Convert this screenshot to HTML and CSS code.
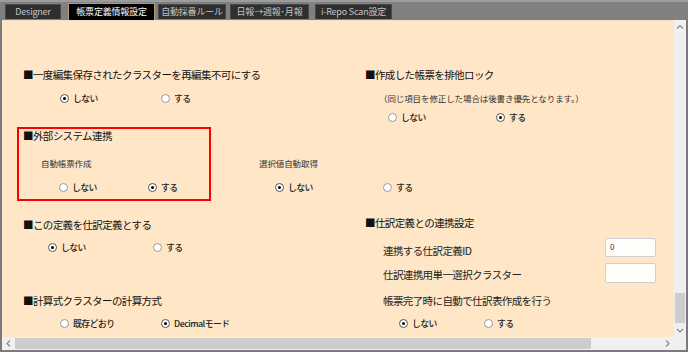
FILE: index.html
```html
<!DOCTYPE html>
<html lang="ja">
<head>
<meta charset="utf-8">
<link rel="stylesheet" href="styles.css">
</head>
<body>
<div class="window">
  <div class="tabs">
    <div class="tab t1">Designer</div>
    <div class="tab t2 sel">帳票定義情報設定</div>
    <div class="tab t3">自動採番ルール</div>
    <div class="tab t4">日報→週報･月報</div>
    <div class="tab t5">i-Repo Scan設定</div>
  </div>

  <div class="content">
    <div class="cols sec-a">
      <div class="col">
        <div class="h">■一度編集保存されたクラスターを再編集不可にする</div>
        <div class="radios ra-l">
          <div class="opt"><span class="dot on"></span>しない</div>
          <div class="opt"><span class="dot"></span>する</div>
        </div>
      </div>
      <div class="col">
        <div class="h">■作成した帳票を排他ロック</div>
        <div class="note">（同じ項目を修正した場合は後書き優先となります。）</div>
        <div class="radios ra-r">
          <div class="opt"><span class="dot"></span>しない</div>
          <div class="opt"><span class="dot on"></span>する</div>
        </div>
      </div>
    </div>

    <div class="sec-b">
      <div class="h">■外部システム連携</div>
      <div class="subs">
        <div class="sub">自動帳票作成</div>
        <div class="sub">選択値自動取得</div>
      </div>
      <div class="radios rb">
        <div class="opt"><span class="dot"></span>しない</div>
        <div class="opt"><span class="dot on"></span>する</div>
        <div class="opt"><span class="dot on"></span>しない</div>
        <div class="opt"><span class="dot"></span>する</div>
      </div>
      <div class="highlight"></div>
    </div>

    <div class="cols sec-c">
      <div class="col">
        <div class="h hc">■この定義を仕訳定義とする</div>
        <div class="radios rc1">
          <div class="opt"><span class="dot on"></span>しない</div>
          <div class="opt"><span class="dot"></span>する</div>
        </div>
        <div class="h hc2">■計算式クラスターの計算方式</div>
        <div class="radios rc2">
          <div class="opt"><span class="dot"></span>既存どおり</div>
          <div class="opt"><span class="dot on"></span>Decimalモード</div>
        </div>
      </div>
      <div class="col">
        <div class="h">■仕訳定義との連携設定</div>
        <div class="field f1">
          <div class="lbl">連携する仕訳定義ID</div>
          <div class="input">0</div>
        </div>
        <div class="field f2">
          <div class="lbl">仕訳連携用単一選択クラスター</div>
          <div class="input"></div>
        </div>
        <div class="lbl lbl3">帳票完了時に自動で仕訳表作成を行う</div>
        <div class="radios rc3">
          <div class="opt"><span class="dot on"></span>しない</div>
          <div class="opt"><span class="dot"></span>する</div>
        </div>
      </div>
    </div>
  </div>

  <div class="vscroll">
    <div class="arrow"><svg width="12" height="12" viewBox="0 0 12 12"><polyline points="3,7.5 6,4.5 9,7.5" fill="none" stroke="#8a8a8a" stroke-width="1.2"/></svg></div>
    <div class="spacer"></div>
    <div class="vthumb"></div>
    <div class="arrow down"><svg width="12" height="12" viewBox="0 0 12 12"><polyline points="3,5 6,8 9,5" fill="none" stroke="#8a8a8a" stroke-width="1.2"/></svg></div>
  </div>

  <div class="hscroll">
    <div class="harrow"><svg width="13" height="13" viewBox="0 0 13 13"><polyline points="8,3.5 5,6.5 8,9.5" fill="none" stroke="#8a8a8a" stroke-width="1.2"/></svg></div>
    <div class="hthumb"></div>
    <div class="spacer"></div>
    <div class="harrow"><svg width="13" height="13" viewBox="0 0 13 13"><polyline points="5,3.5 8,6.5 5,9.5" fill="none" stroke="#8a8a8a" stroke-width="1.2"/></svg></div>
  </div>
  <div class="corner"></div>
</div>
</body>
</html>
```
FILE: styles.css
```css
html, body {
  margin: 0;
  padding: 0;
  background: #7f7f7f;
}

body {
  font-family: "Noto Sans CJK JP", "Noto Sans", sans-serif;
}

.window {
  width: 688px;
  height: 352px;
  box-sizing: border-box;
  padding: 0 2px 2px 2px;
  background: #7b7b7b;
  border-top: 2px solid #9c9c9c;
  display: grid;
  grid-template-columns: 672px 12px;
  grid-template-rows: 18px 317px 13px;
}

/* Tabs */
.tabs {
  grid-column: 1 / -1;
  display: flex;
  align-items: flex-end;
  gap: 4px;
  padding-left: 5px;
  background: #808080;
  margin: 0 -2px;
}

.tab {
  height: 15px;
  margin-bottom: 1px;
  box-sizing: border-box;
  background: #2f2f2f;
  border: 1px solid #4a4a4a;
  border-bottom: none;
  color: #c4c4c4;
  font-size: 9px;
  line-height: 14px;
  text-align: center;
  white-space: nowrap;
  letter-spacing: -0.2px;
}

.tab.sel {
  height: 17px;
  margin-bottom: 0;
  background: #000;
  border-color: #b89a66;
  color: #fff;
  line-height: 16px;
}

.t1 { width: 56px; margin-right: 3px; }
.t2 { width: 87px; }
.t3 { width: 68px; margin-left: -1px; }
.t4 { width: 79px; }
.t5 { width: 77px; margin-left: 2px; }

/* Content */
.content {
  background: #ffe6c6;
  border-top: 1px solid #f2e2cc;
  overflow: hidden;
  box-sizing: border-box;
  padding: 46px 0 0 21px;
  color: #222;
}

.cols {
  display: grid;
  grid-template-columns: 342px 1fr;
}

.h {
  font-size: 10.5px;
  line-height: 16px;
  height: 16px;
  color: #111;
  letter-spacing: -0.6px;
  white-space: nowrap;
}

.lbl {
  font-size: 10.5px;
  line-height: 14px;
  color: #222;
  letter-spacing: -0.6px;
  white-space: nowrap;
}

.radios {
  display: flex;
  align-items: center;
  height: 14px;
  font-size: 8.8px;
  font-weight: 500;
  letter-spacing: -0.5px;
  color: #222;
  white-space: nowrap;
}

.opt {
  display: flex;
  align-items: center;
  gap: 4px;
}

.dot {
  width: 9px;
  height: 9px;
  box-sizing: border-box;
  border: 1px solid #9a9a9a;
  border-radius: 50%;
  background: #fff;
  display: flex;
  align-items: center;
  justify-content: center;
  flex: none;
}

.dot.on {
  border-color: #555;
}

.dot.on::after {
  content: "";
  width: 3px;
  height: 3px;
  border-radius: 50%;
  background: #000;
}

.note {
  margin-top: 8px;
  padding-left: 14px;
  font-size: 8.5px;
  line-height: 14px;
  color: #333;
  letter-spacing: -0.1px;
  white-space: nowrap;
}

.ra-l { margin-top: 8px; padding-left: 37px; }
.ra-l .opt:first-child { width: 101px; }

.ra-r { margin-top: 5px; padding-left: 23px; }
.ra-r .opt:first-child { width: 108px; }

/* Section B */
.sec-b {
  position: relative;
  margin-top: 4px;
}

.subs {
  display: flex;
  margin-top: 13px;
  padding-left: 18px;
  height: 12px;
}

.sub {
  font-size: 8.5px;
  line-height: 12px;
  color: #333;
  letter-spacing: -0.1px;
  white-space: nowrap;
}

.sub:first-child { width: 218px; }

.rb { margin-top: 11px; padding-left: 36px; }
.rb .opt:nth-child(1) { width: 89px; }
.rb .opt:nth-child(2) { width: 127px; }
.rb .opt:nth-child(3) { width: 108px; }

.highlight {
  position: absolute;
  left: -6px;
  top: -1px;
  width: 194px;
  height: 74px;
  box-sizing: border-box;
  border: 2px solid #f00;
}

/* Section C */
.sec-c { margin-top: 21px; }

.hc { margin-top: 2px; }
.rc1 { margin-top: 7px; padding-left: 25px; }
.rc1 .opt:first-child { width: 105px; }

.hc2 { margin-top: 39px; }
.rc2 { margin-top: 7px; padding-left: 37px; }
.rc2 .opt:first-child { width: 101px; }

.field {
  display: flex;
  align-items: flex-start;
  padding-left: 18px;
}

.field .lbl { width: 222px; }

.f1 { margin-top: 7px; height: 19px; }
.f1 .lbl { margin-top: 6px; }
.f2 { margin-top: 6px; height: 20px; }
.f2 .lbl { margin-top: 5px; }
.f2 .input { height: 20px; }

.input {
  width: 51px;
  height: 19px;
  box-sizing: border-box;
  background: #fffdfa;
  border: 1px solid #cfcfcf;
  border-radius: 2px;
  font-size: 8px;
  line-height: 10px;
  padding: 3px 0 0 4px;
  color: #333;
}

.lbl3 { margin-top: 11px; padding-left: 18px; }

.rc3 { margin-top: 8px; padding-left: 34px; }
.rc3 .opt:first-child { width: 85px; }

/* Scrollbars */
.vscroll {
  background: #f0f0f0;
  display: flex;
  flex-direction: column;
}

.arrow {
  height: 14px;
  display: flex;
  align-items: center;
  justify-content: center;
}

.spacer { flex: 1; }

.vthumb {
  height: 30px;
  margin: 0 1px;
  background: #cdcdcd;
}

.hscroll {
  background: #f0f0f0;
  display: flex;
}

.harrow {
  width: 13px;
  display: flex;
  align-items: center;
  justify-content: center;
}

.hthumb {
  width: 576px;
  margin: 1px 0;
  background: #cdcdcd;
}

.corner {
  background: #f0f0f0;
}
```
